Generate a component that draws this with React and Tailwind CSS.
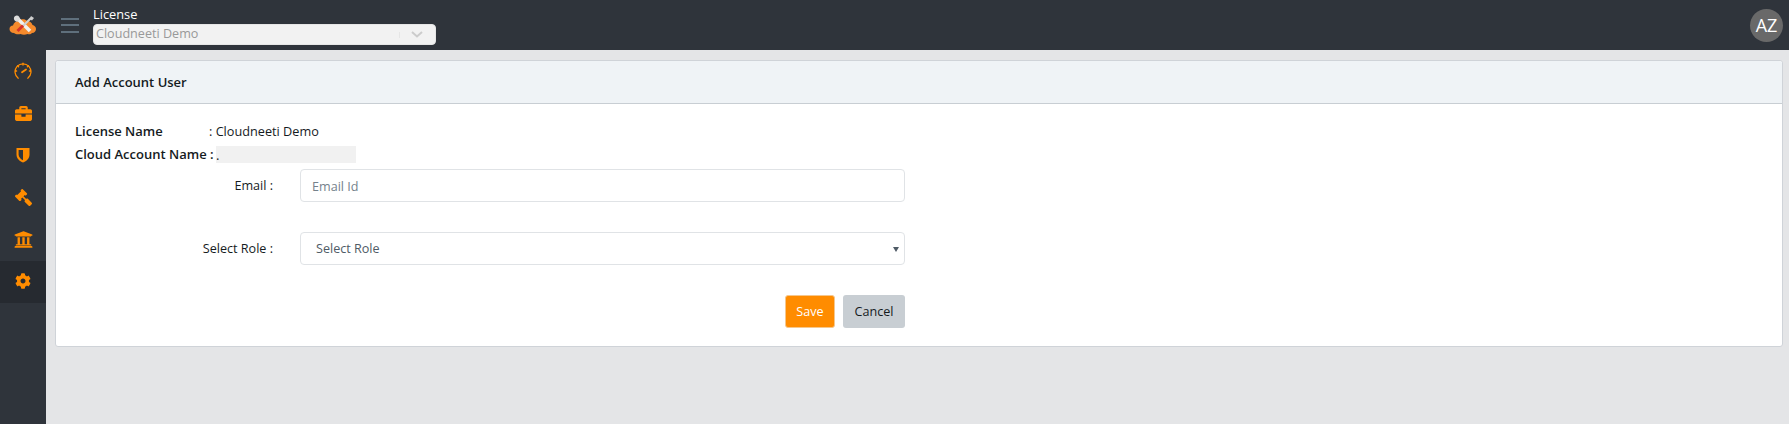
import { FaBriefcase, FaCog, FaGavel, FaUniversity } from "react-icons/fa";

const Shield = () => (
  <svg width="14" height="16" viewBox="0 0 14 16">
    <path d="M0.500 1h13v6.500c0 4-3 6.800-6.500 8-3.500-1.200-6.500-4-6.500-8z" fill="currentColor" />
    <path d="M7 3v10.200c-2.500-1.100-4.400-3.200-4.400-5.700V3z" fill="#2f343b" />
  </svg>
);

const navItems = [
  { icon: <FaBriefcase size={17} /> },
  { icon: <Shield /> },
  { icon: <FaGavel size={17} className="-scale-x-100" /> },
  { icon: <FaUniversity size={19} /> },
  { icon: <FaCog size={16} />, active: true },
];

const Logo = () => (
  <svg width="28" height="20" viewBox="0 0 28 20">
    <path
      d="M5 18c-3 0-4.500-2-4.500-4s1.500-3.500 3.500-3.500c.5-2.500 3-4.500 6-4.500 2-2.500 6-2.500 8 0 3 0 5 2 5.500 4 2 .5 3.500 2 3.500 4s-1.500 4-4 4c-1 1.500-3 1.500-4.500 1-2 1-5 1-7 0-2 .5-5 .5-6.500-1z"
      fill="#f58a2c"
    />
    <path d="M9 4l12 12" stroke="#f0f0f0" strokeWidth="3.500" />
    <path d="M7.500 0.500c-1.800.3-3 2-2.500 3.800.5 1.700 2.200 2.700 4 2.300l1.800-2.200c.4-2-1.300-4.200-3.300-3.900z" fill="#dcdcdc" />
    <path d="M22 3L14 11" stroke="#cfcfcf" strokeWidth="2.200" />
    <path d="M22 1l3 2-2 2.500-2.500-1.500z" fill="#cfcfcf" />
    <path d="M14 10.500L8.500 16" stroke="#d8322a" strokeWidth="3" />
  </svg>
);

const Speedometer = () => (
  <svg width="18" height="18" viewBox="0 0 18 18" fill="none" stroke="currentColor" strokeWidth="1.300" strokeLinecap="round">
    <path d="M4.200 16.200A8 8 0 1 1 13.800 16.200" />
    <path d="M9 1.200v1.800M2.600 9H1.200M16.800 9h-1.400M3.600 3.800l1 1M14.400 3.800l-1 1" />
    <path d="M8 10.200l4-2.800" strokeWidth="1.800" />
  </svg>
);

const App = () => {
  return (
    <div className="flex flex-col h-[424px] bg-[#e4e5e7] text-[12.600px] text-[#151b1e] font-['Open_Sans','Noto_Sans',sans-serif]">
      <header className="h-[50px] flex items-center bg-[#2f343b] shrink-0">
        <div className="w-[46px] flex justify-center">
          <Logo />
        </div>
        <div className="ml-[15px] w-[18px] flex flex-col gap-[4.500px]">
          <span className="h-[2px] bg-[#5f6f7c]" />
          <span className="h-[2px] bg-[#5f6f7c]" />
          <span className="h-[2px] bg-[#5f6f7c]" />
        </div>
        <div className="ml-[14px] w-[343px] self-start pt-[5px]">
          <div className="text-[12.800px] leading-[19px] text-white">License</div>
          <div className="h-[21px] flex items-center rounded-[4px] bg-[#f2f2f2] border border-[#e6e6e6] pl-[2px] pr-[12px] text-[#999999]">
            <span className="flex-1">Cloudneeti Demo</span>
            <span className="w-px h-[6px] bg-[#e6e6e6] mr-[11px]" />
            <svg width="12" height="7" viewBox="0 0 12 7" fill="none" stroke="#cccccc" strokeWidth="2">
              <path d="M1 1l5 4.500L11 1" />
            </svg>
          </div>
        </div>
        <div className="ml-auto mr-[6px] w-[33px] h-[33px] rounded-full bg-[#696969] text-white text-[18px] flex items-center justify-center">
          AZ
        </div>
      </header>

      <div className="flex flex-1 min-h-0">
        <aside className="w-[46px] bg-[#2f343b] shrink-0 flex flex-col text-[#ff8c00] pt-[1px]">
          <div className="h-[42px] pb-[3px] flex items-center justify-center">
            <Speedometer />
          </div>
          {navItems.map((item, i) => (
            <div
              key={i}
              className={`h-[42px] pb-[2px] flex items-center justify-center ${item.active ? "bg-[#262a30]" : ""}`}
            >
              {item.icon}
            </div>
          ))}
        </aside>

        <main className="flex-1 min-w-0 pt-[10px] pl-[9px] pr-[6px]">
          <div className="bg-white border border-[#cfd3d8] rounded-[3px] h-[287px]">
            <div className="h-[43px] pt-[1px] flex items-center px-[19px] bg-[#eff3f6] border-b border-[#c8ced3] font-semibold text-[13px] rounded-t-[3px]">
              Add Account User
            </div>
            <div className="pt-[17px] pl-[19px]">
              <div className="flex items-center h-[22px] font-semibold text-[13px]">
                <span className="w-[134px]">License Name</span>
                <span className="font-normal text-[12.700px]">: Cloudneeti Demo</span>
              </div>
              <div className="flex items-center h-[23px] font-semibold text-[13px]">
                <span className="w-[141px] whitespace-nowrap">Cloud Account Name :</span>
                <span className="w-[140px] h-[17px] bg-[#f1f1f1] font-normal leading-[19px]">.</span>
              </div>

              <div className="w-[830px] mt-[3px]">
                <div className="flex items-center">
                  <label className="w-[198px] pt-[2px] text-right">Email :</label>
                  <input
                    placeholder="Email Id"
                    className="ml-[27px] flex-1 h-[33px] pt-[2px] px-[11px] bg-white border border-[#e0e3e6] rounded-[4px] outline-none placeholder:text-[#75828c]"
                  />
                </div>
                <div className="flex items-center mt-[30px]">
                  <label className="w-[198px] pt-[2px] text-right">Select Role :</label>
                  <div className="ml-[27px] flex-1 h-[33px] pt-[2px] flex items-center pl-[15px] pr-[5px] text-[#4f5b66] bg-white border border-[#e0e3e6] rounded-[4px]">
                    <span className="flex-1">Select Role</span>
                    <svg width="6" height="5" viewBox="0 0 6 5">
                      <path d="M0 0h6L3 5z" fill="#4f5b66" />
                    </svg>
                  </div>
                </div>
                <div className="flex justify-end gap-[8px] mt-[30px]">
                  <button className="w-[50px] h-[33px] pt-[2px] bg-[#ff8c00] border border-[#f5c78e] rounded-[3px] text-white">
                    Save
                  </button>
                  <button className="w-[62px] h-[33px] pt-[2px] bg-[#c8ced3] rounded-[3px] text-[#151b1e]">
                    Cancel
                  </button>
                </div>
              </div>
            </div>
          </div>
        </main>
      </div>
    </div>
  );
};

export default App;
